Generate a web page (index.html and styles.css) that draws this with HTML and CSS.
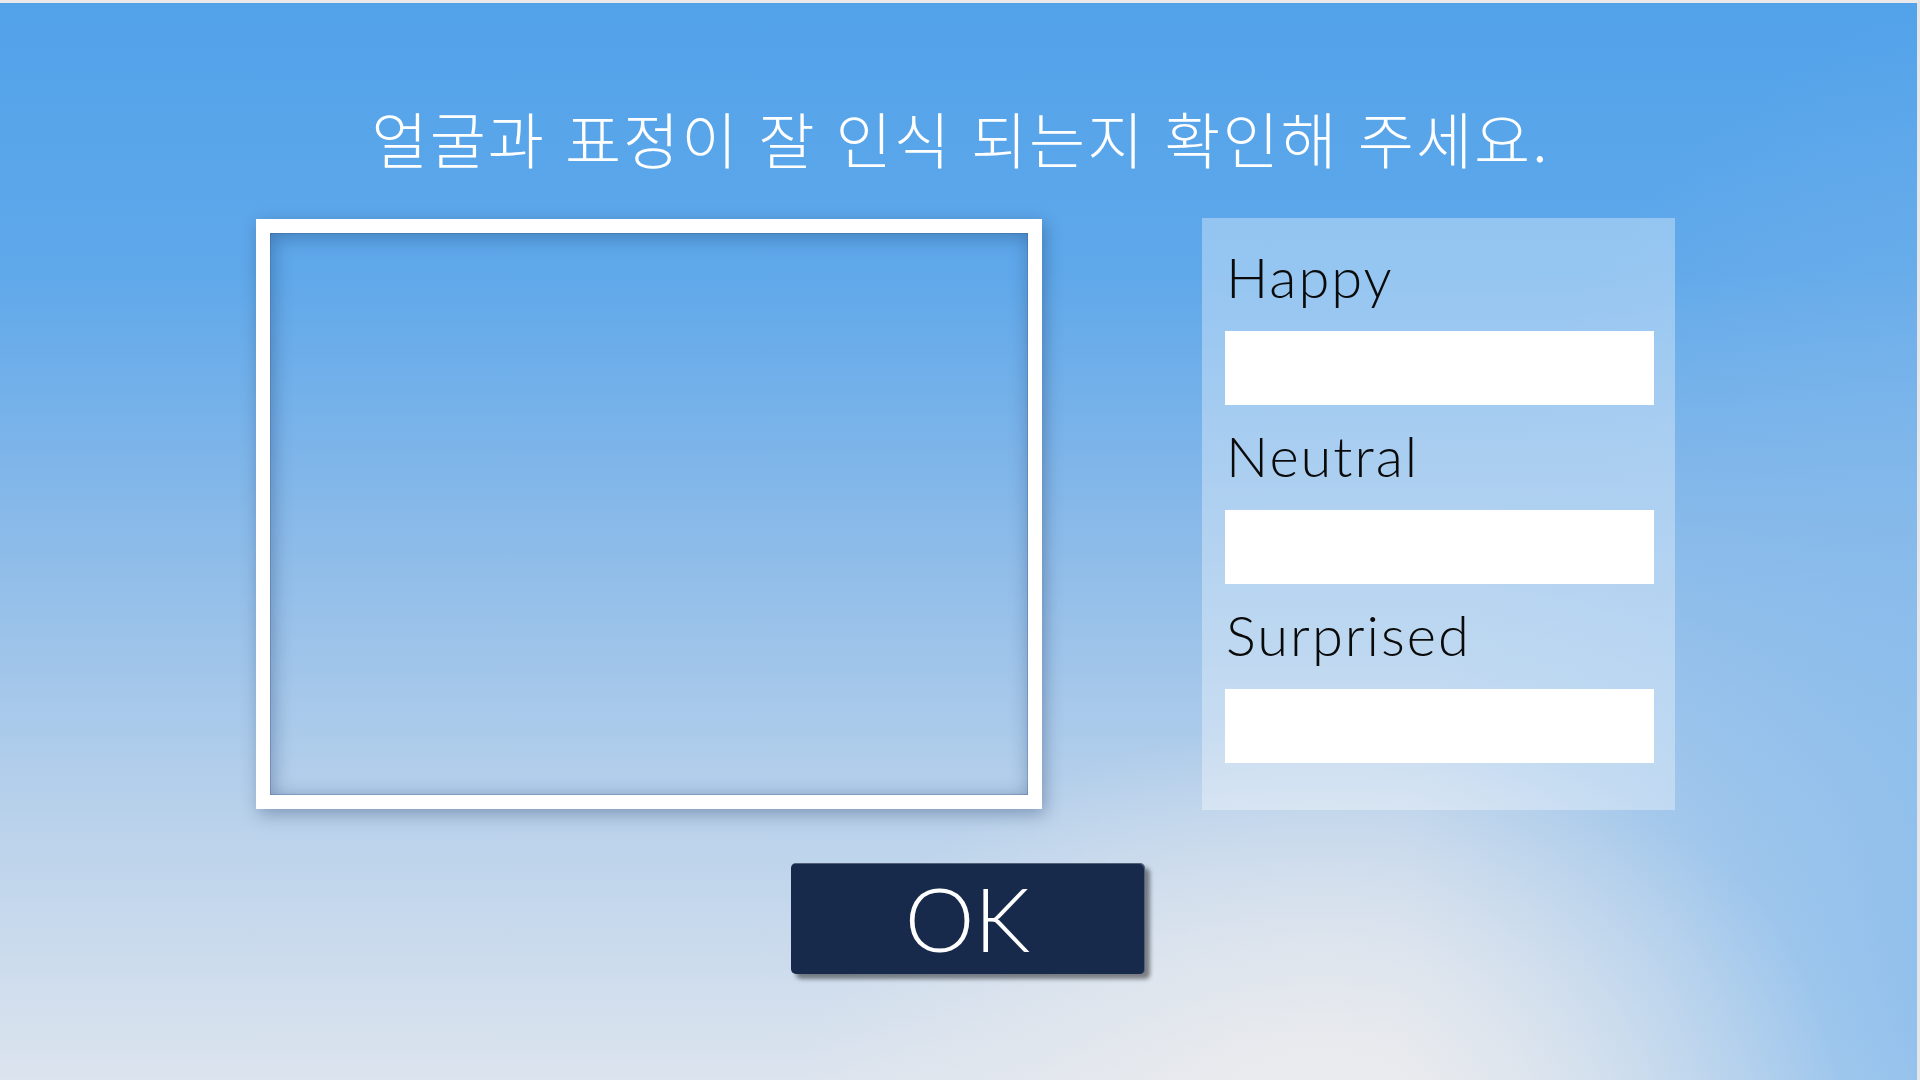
FILE: index.html
```html
<!DOCTYPE html>
<html lang="ko">
<head>
<meta charset="utf-8">
<title>표정 인식 확인</title>
<link rel="stylesheet" href="styles.css">
</head>
<body>
<div class="screen">
  <h1 class="title">얼굴과 표정이 잘 인식 되는지 확인해 주세요.</h1>
  <div class="content">
    <div class="camera-frame"></div>
    <div class="panel">
      <div class="group">
        <div class="label">Happy</div>
        <div class="field"></div>
      </div>
      <div class="group">
        <div class="label">Neutral</div>
        <div class="field"></div>
      </div>
      <div class="group">
        <div class="label">Surprised</div>
        <div class="field"></div>
      </div>
    </div>
  </div>
  <div class="actions">
    <button class="ok-btn">OK</button>
  </div>
</div>
</body>
</html>
```

FILE: styles.css
```css
html, body {
  margin: 0;
  padding: 0;
  background: #ebebeb;
}

.screen {
  box-sizing: border-box;
  width: 1920px;
  height: 1080px;
  overflow: hidden;
  border-top: 3px solid #e9e9e9;
  border-right: 3px solid #e4e6ea;
  background:
    radial-gradient(ellipse 520px 380px at 1320px 1100px, rgba(236,236,238,0.95) 0%, rgba(236,236,238,0) 100%),
    radial-gradient(ellipse 600px 1000px at 2000px 1000px, rgba(130,185,236,0.9) 0%, rgba(130,185,236,0.55) 45%, rgba(130,185,236,0) 100%),
    linear-gradient(to bottom, #52a2ea 0%, #5fa8ea 25%, #8cbbe9 50%, #b8d1eb 75%, #dce4ee 100%);
  font-family: "Lato", "Noto Sans", sans-serif;
}

.title {
  margin: 0;
  padding-top: 95px;
  height: 120px;
  text-align: center;
  color: #ffffff;
  font-family: "Noto Sans CJK KR", "Noto Sans", sans-serif;
  font-weight: 300;
  font-size: 61px;
  line-height: 80px;
  letter-spacing: 2px;
  padding-left: 4px;
}

.content {
  display: flex;
  align-items: flex-start;
  gap: 160px;
  padding-left: 256px;
  margin-top: 0;
}

.camera-frame {
  box-sizing: border-box;
  width: 786px;
  height: 590px;
  margin-top: 1px;
  border: 14px solid #ffffff;
  box-shadow:
    3px 5px 16px rgba(20, 45, 90, 0.35),
    inset 2px 3px 20px rgba(20, 50, 100, 0.4),
    inset 0 0 0 1px rgba(80, 110, 150, 0.35);
}

.panel {
  box-sizing: border-box;
  width: 473px;
  height: 592px;
  padding: 25px 21px 0 23px;
  background: rgba(255, 255, 255, 0.34);
  display: flex;
  flex-direction: column;
  gap: 17px;
}

.label {
  font-size: 56px;
  font-weight: 300;
  line-height: 67px;
  letter-spacing: 2px;
  color: #0a0a0a;
  margin-left: 1px;
}

.field {
  width: 429px;
  height: 74px;
  margin-top: 21px;
  background: #ffffff;
}

.actions {
  display: flex;
  justify-content: center;
  padding-left: 18px;
  margin-top: 53px;
}

.ok-btn {
  width: 354px;
  height: 111px;
  border: none;
  border-radius: 5px;
  background: #172a4c;
  color: #ffffff;
  font-family: "Lato", "Noto Sans", sans-serif;
  font-weight: 300;
  font-size: 88px;
  line-height: 111px;
  padding: 0;
  box-shadow: 5px 5px 4px rgba(0, 0, 0, 0.45), inset -1px 1px 0 rgba(255,255,255,0.25);
}
```
